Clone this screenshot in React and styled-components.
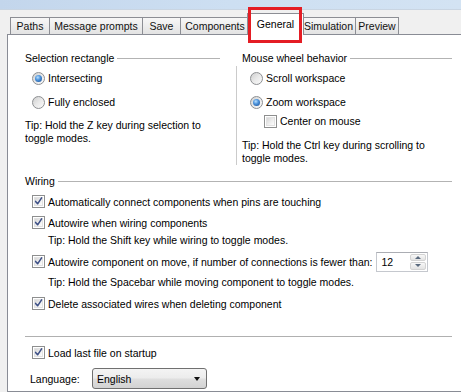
import React from "react";
import styled, { createGlobalStyle } from "styled-components";

const GlobalStyle = createGlobalStyle`
  html, body { margin: 0; padding: 0; }
  body {
    background: #f0f0f0;
    font-family: "Liberation Sans", Arial, sans-serif;
    font-size: 10.5px;
    color: #000;
  }
`;

const Window = styled.div`
  width: 461px;
  height: 392px;
  overflow: hidden;
  background: #f0f0f0;
  display: flex;
  flex-direction: column;
`;

const TitleStrip = styled.div`
  flex: none;
  height: 9px;
  background: linear-gradient(90deg, #c3d6ec 0%, #cddff2 50%, #d3e3f3 100%);
  border-bottom: 1px solid #c9d5e2;
`;

const TabBar = styled.div`
  flex: none;
  height: 25px;
  display: flex;
  align-items: flex-end;
  padding-left: 10px;
  position: relative;
  z-index: 2;
`;

const Tab = styled.div`
  box-sizing: border-box;
  width: ${(p) => p.$w}px;
  height: 17px;
  margin-bottom: 1px;
  margin-left: ${(p) => (p.$first ? 0 : -1)}px;
  border: 1px solid #8c8e94;
  border-bottom: none;
  background: linear-gradient(#f7f7f7 0%, #ececec 55%, #e3e3e3 100%);
  display: flex;
  align-items: center;
  justify-content: center;
  white-space: nowrap;
  color: #111;
`;

const ActiveTab = styled.div`
  position: relative;
  box-sizing: border-box;
  width: ${(p) => p.$w}px;
  height: 22px;
  margin: 0 -2px 0 -3px;
  border: 1px solid #8c8e94;
  border-bottom: none;
  background: #fff;
  display: flex;
  align-items: center;
  justify-content: center;
  padding-bottom: 1px;
  white-space: nowrap;
  z-index: 1;
`;

const Highlight = styled.div`
  position: absolute;
  left: 0px;
  top: -7px;
  width: 54px;
  height: 36px;
  box-sizing: border-box;
  border: 3px solid #e41d24;
  pointer-events: none;
`;

const Panel = styled.div`
  flex: 1;
  margin-top: -1px;
  margin-left: 7px;
  width: 480px;
  background: #fff;
  border: 1px solid #898c95;
  padding: 17px 0 0 17px;
`;

const Content = styled.div`
  width: 427px;
  display: flex;
  flex-direction: column;
`;

const TopSection = styled.div`
  display: grid;
  grid-template-columns: 195px 216px;
  column-gap: 16px;
`;

const Group = styled.div`
  display: flex;
  flex-direction: column;
`;

const Legend = styled.div`
  display: flex;
  align-items: center;
  gap: 3px;
  height: 13px;
  line-height: 13px;
  margin-left: ${(p) => p.$indent || 0}px;
  margin-top: ${(p) => p.$mt || 0}px;
  white-space: nowrap;
  &::after {
    content: "";
    flex: 1;
    height: 1px;
    background: #b3b3b3;
  }
`;

const Body = styled.div`
  display: flex;
  flex-direction: column;
  margin-top: 1px;
`;

const SideBody = styled(Body)`
  border-left: 1px solid #cbcbcb;
`;

const Row = styled.div`
  display: flex;
  align-items: center;
  gap: ${(p) => p.$gap ?? 3}px;
  height: ${(p) => p.$h || 21}px;
  margin-left: ${(p) => p.$indent || 0}px;
  margin-top: ${(p) => p.$mt || 0}px;
  white-space: nowrap;
`;

const Tip = styled.div`
  line-height: 13px;
  margin-left: ${(p) => p.$indent || 0}px;
  margin-top: ${(p) => p.$mt || 0}px;
  white-space: nowrap;
`;

const RadioCircle = styled.span`
  flex: none;
  box-sizing: border-box;
  width: 13px;
  height: 13px;
  border-radius: 50%;
  border: 1px solid #8d8f92;
  background: linear-gradient(135deg, #cfcfcf 0%, #e9e9e9 50%, #fbfbfb 100%);
  display: flex;
  align-items: center;
  justify-content: center;
  &::after {
    content: "";
    display: ${(p) => (p.$checked ? "block" : "none")};
    width: 7px;
    height: 7px;
    border-radius: 50%;
    background: radial-gradient(circle at 40% 35%, #b9e0ff 0%, #4f95dc 40%, #13468f 100%);
  }
`;

const CheckBox = styled.span`
  flex: none;
  box-sizing: border-box;
  width: 13px;
  height: 13px;
  border: 1px solid #8e8f8f;
  background: #fff;
  padding: 1px;
  display: flex;
`;

const CheckInner = styled.span`
  flex: 1;
  position: relative;
  border: 1px solid #e2e2e2;
  background: linear-gradient(135deg, #d6d6d6 0%, #eeeeee 55%, #fdfdfd 100%);
  svg {
    position: absolute;
    left: -2px;
    top: -2px;
  }
`;

const Separator = styled.div`
  height: 1px;
  background: #b0b0b0;
  margin-top: ${(p) => p.$mt || 0}px;
`;

const Spin = styled.div`
  box-sizing: border-box;
  width: 52px;
  height: 20px;
  border: 1px solid #c5c8ce;
  border-top-color: #abadb3;
  display: flex;
  background: #fff;
`;

const SpinValue = styled.div`
  flex: 1;
  padding-left: 5px;
  display: flex;
  align-items: center;
`;

const SpinButtons = styled.div`
  width: 16px;
  display: flex;
  flex-direction: column;
  padding: 1px 1px 1px 0;
  gap: 1px;
`;

const SpinButton = styled.div`
  flex: 1;
  border: 1px solid #d3d3d3;
  border-radius: 2px;
  background: linear-gradient(#f8f8f8, #e3e3e3);
  display: flex;
  align-items: center;
  justify-content: center;
  &::after {
    content: "";
    border-left: 3px solid transparent;
    border-right: 3px solid transparent;
    ${(p) =>
      p.$up
        ? "border-bottom: 3px solid #5a6a7e;"
        : "border-top: 3px solid #5a6a7e;"}
  }
`;

const LangLabel = styled.span`
  width: 62px;
`;

const Select = styled.div`
  box-sizing: border-box;
  width: 115px;
  height: 21px;
  border: 1px solid #707070;
  border-radius: 3px;
  background: linear-gradient(#f4f4f4 0%, #ececec 48%, #dfdfdf 52%, #d2d2d2 100%);
  display: flex;
  align-items: center;
  justify-content: space-between;
  padding: 0 6px 0 4px;
  &::after {
    content: "";
    border-left: 3.5px solid transparent;
    border-right: 3.5px solid transparent;
    border-top: 4px solid #111;
  }
`;

const Radio = ({ checked }) => <RadioCircle $checked={checked} />;

const Check = ({ checked = true }) => (
  <CheckBox>
    <CheckInner>
      {checked && (
        <svg width="11" height="11" viewBox="0 0 11 11">
          <path
            d="M2.6 5.4 L4.6 7.8 L8.6 1.8"
            fill="none"
            stroke="#3c4f86"
            strokeWidth="1.5"
            strokeLinecap="round"
            strokeLinejoin="round"
          />
        </svg>
      )}
    </CheckInner>
  </CheckBox>
);

const tabs = [
  { label: "Paths", w: 40 },
  { label: "Message prompts", w: 94 },
  { label: "Save", w: 39 },
  { label: "Components", w: 70 },
  { label: "General", w: 57, active: true },
  { label: "Simulation", w: 55 },
  { label: "Preview", w: 44 },
];

export default function App() {
  return (
    <>
      <GlobalStyle />
      <Window>
        <TitleStrip />
        <TabBar>
          {tabs.map((t, i) =>
            t.active ? (
              <ActiveTab key={t.label} $w={t.w}>
                {t.label}
                <Highlight />
              </ActiveTab>
            ) : (
              <Tab key={t.label} $w={t.w} $first={i === 0}>
                {t.label}
              </Tab>
            )
          )}
        </TabBar>
        <Panel>
          <Content>
            <TopSection>
              <Group>
                <Legend>Selection rectangle</Legend>
                <Body>
                  <Row $h={24} $indent={7}>
                    <Radio checked />
                    Intersecting
                  </Row>
                  <Row $h={24} $indent={7}>
                    <Radio />
                    Fully enclosed
                  </Row>
                  <Tip $mt={5}>
                    Tip: Hold the Z key during selection to
                    <br />
                    toggle modes.
                  </Tip>
                </Body>
              </Group>
              <Group>
                <Legend $indent={6}>Mouse wheel behavior</Legend>
                <SideBody>
                  <Row $h={24} $indent={13}>
                    <Radio />
                    Scroll workspace
                  </Row>
                  <Row $h={24} $indent={13}>
                    <Radio checked />
                    Zoom workspace
                  </Row>
                  <Row $h={14} $indent={27}>
                    <Check checked={false} />
                    Center on mouse
                  </Row>
                  <Tip $indent={5} $mt={11}>
                    Tip: Hold the Ctrl key during scrolling to
                    <br />
                    toggle modes.
                  </Tip>
                </SideBody>
              </Group>
            </TopSection>

            <Legend $mt={10}>Wiring</Legend>
            <Row $indent={7} $mt={3}>
              <Check />
              Automatically connect components when pins are touching
            </Row>
            <Row $indent={7}>
              <Check />
              Autowire when wiring components
            </Row>
            <Tip $indent={23} $mt={1}>
              Tip: Hold the Shift key while wiring to toggle modes.
            </Tip>
            <Row $indent={7} $mt={4}>
              <Check />
              Autowire component on move, if number of connections is fewer than:
              <Spin>
                <SpinValue>12</SpinValue>
                <SpinButtons>
                  <SpinButton $up />
                  <SpinButton />
                </SpinButtons>
              </Spin>
            </Row>
            <Tip $indent={23} $mt={4}>
              Tip: Hold the Spacebar while moving component to toggle modes.
            </Tip>
            <Row $indent={7} $mt={4}>
              <Check />
              Delete associated wires when deleting component
            </Row>
            <Separator $mt={22} />
            <Row $indent={7} $mt={5}>
              <Check />
              Load last file on startup
            </Row>
            <Row $indent={5} $mt={5} $gap={0}>
              <LangLabel>Language:</LangLabel>
              <Select>English</Select>
            </Row>
          </Content>
        </Panel>
      </Window>
    </>
  );
}
